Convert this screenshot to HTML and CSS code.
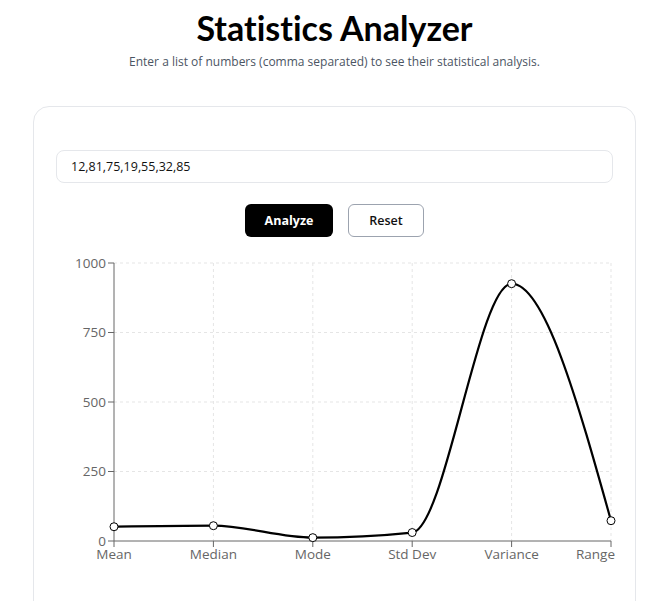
FILE: index.html
```html
<!DOCTYPE html>
<html lang="en">
<head>
    <meta charset="UTF-8">
    <meta name="viewport" content="width=device-width, initial-scale=1.0">
    <title>Statistics Analyzer</title>
    <link rel="stylesheet" href="styles.css">
</head>
<body>

    <div class="page">
        <h1 class="title">Statistics Analyzer</h1>
        <p class="subtitle">Enter a list of numbers (comma separated) to see their statistical analysis.</p>

        <div class="card">
            <input class="numbers" type="text" value="12,81,75,19,55,32,85">

            <div class="actions">
                <button class="btn btn-primary">Analyze</button>
                <button class="btn btn-outline">Reset</button>
            </div>

            <!-- Grafico dei risultati -->
            <svg class="chart" width="558" height="320">
                <g class="grid">
                    <line x1="58" y1="5" x2="555" y2="5"/>
                    <line x1="58" y1="74.5" x2="555" y2="74.5"/>
                    <line x1="58" y1="144" x2="555" y2="144"/>
                    <line x1="58" y1="213.5" x2="555" y2="213.5"/>
                    <line x1="157.4" y1="5" x2="157.4" y2="283"/>
                    <line x1="256.8" y1="5" x2="256.8" y2="283"/>
                    <line x1="356.2" y1="5" x2="356.2" y2="283"/>
                    <line x1="455.6" y1="5" x2="455.6" y2="283"/>
                    <line x1="555" y1="5" x2="555" y2="283"/>
                </g>

                <g class="axis">
                    <line x1="58" y1="5" x2="58" y2="283"/>
                    <line x1="58" y1="283" x2="555" y2="283"/>
                    <line x1="52" y1="5" x2="58" y2="5"/>
                    <line x1="52" y1="74.5" x2="58" y2="74.5"/>
                    <line x1="52" y1="144" x2="58" y2="144"/>
                    <line x1="52" y1="213.5" x2="58" y2="213.5"/>
                    <line x1="52" y1="283" x2="58" y2="283"/>
                    <line x1="58" y1="283" x2="58" y2="289"/>
                    <line x1="157.4" y1="283" x2="157.4" y2="289"/>
                    <line x1="256.8" y1="283" x2="256.8" y2="289"/>
                    <line x1="356.2" y1="283" x2="356.2" y2="289"/>
                    <line x1="455.6" y1="283" x2="455.6" y2="289"/>
                    <line x1="555" y1="283" x2="555" y2="289"/>
                </g>

                <g class="y-labels">
                    <text x="50" y="5" dy="0.355em">1000</text>
                    <text x="50" y="74.5" dy="0.355em">750</text>
                    <text x="50" y="144" dy="0.355em">500</text>
                    <text x="50" y="213.5" dy="0.355em">250</text>
                    <text x="50" y="283" dy="0.355em">0</text>
                </g>

                <g class="x-labels">
                    <text x="58" y="291" dy="0.71em">Mean</text>
                    <text x="157.4" y="291" dy="0.71em">Median</text>
                    <text x="256.8" y="291" dy="0.71em">Mode</text>
                    <text x="356.2" y="291" dy="0.71em">Std Dev</text>
                    <text x="455.6" y="291" dy="0.71em">Variance</text>
                    <text class="last" x="559" y="291" dy="0.71em">Range</text>
                </g>

                <path class="line" d="M58,268.74 C91.13,268.23 124.27,267.71 157.4,267.71 C190.53,267.71 223.67,279.66 256.8,279.66 C289.93,279.66 323.07,277.95 356.2,274.54 C389.33,271.13 422.47,25.7 455.6,25.7 C488.73,25.7 521.87,144.21 555,262.71"/>

                <g class="dots">
                    <circle cx="58" cy="268.74" r="4"/>
                    <circle cx="157.4" cy="267.71" r="4"/>
                    <circle cx="256.8" cy="279.66" r="4"/>
                    <circle cx="356.2" cy="274.54" r="4"/>
                    <circle cx="455.6" cy="25.7" r="4"/>
                    <circle cx="555" cy="262.71" r="4"/>
                </g>
            </svg>
        </div>
    </div>

</body>
</html>
```

FILE: styles.css
```css
body {
    margin: 0;
    font-family: "Open Sans", "Noto Sans", sans-serif;
    color: #000;
    background: #fff;
}

.page {
    width: 603px;
    margin-left: 33px;
    text-align: center;
}

.title {
    font-family: Lato, "Open Sans", sans-serif;
    font-size: 34px;
    font-weight: 700;
    line-height: 40px;
    margin: 8px 0 0;
    font-variant-ligatures: none;
}

.subtitle {
    font-size: 12px;
    color: #4b5563;
    margin: 5px 0 0;
}

.card {
    margin-top: 36px;
    border: 1px solid #e5e7eb;
    border-radius: 16px;
    padding: 43px 22px 40px;
    text-align: left;
}

.numbers {
    display: block;
    box-sizing: border-box;
    width: 100%;
    height: 33px;
    padding: 0 14px;
    border: 1px solid #e5e7eb;
    border-radius: 8px;
    font-family: inherit;
    font-size: 12.5px;
    color: #111;
    outline: none;
}

/* Pulsanti */
.actions {
    display: flex;
    justify-content: center;
    gap: 15px;
    margin-top: 21px;
}

.btn {
    height: 33px;
    border-radius: 6px;
    font-family: inherit;
    font-size: 12.5px;
    font-weight: 600;
    cursor: pointer;
}

.btn-primary {
    width: 88px;
    background: #000;
    color: #fff;
    border: none;
    font-weight: 700;
}

.btn-outline {
    width: 76px;
    background: #fff;
    color: #111;
    border: 1px solid #9ca3af;
}

/* Grafico */
.chart {
    display: block;
    margin-top: 21px;
    overflow: visible;
    font-family: "Open Sans", "Noto Sans", sans-serif;
    font-size: 13.5px;
}

.grid line {
    stroke: #e5e5e5;
    stroke-dasharray: 3 3;
}

.axis line {
    stroke: #666;
}

.y-labels text {
    fill: #666;
    text-anchor: end;
}

.x-labels text {
    fill: #666;
    text-anchor: middle;
}

.x-labels text.last {
    text-anchor: end;
}

.line {
    fill: none;
    stroke: #000;
    stroke-width: 2.2;
}

.dots circle {
    fill: #fff;
    stroke: #000;
    stroke-width: 1;
}
```
